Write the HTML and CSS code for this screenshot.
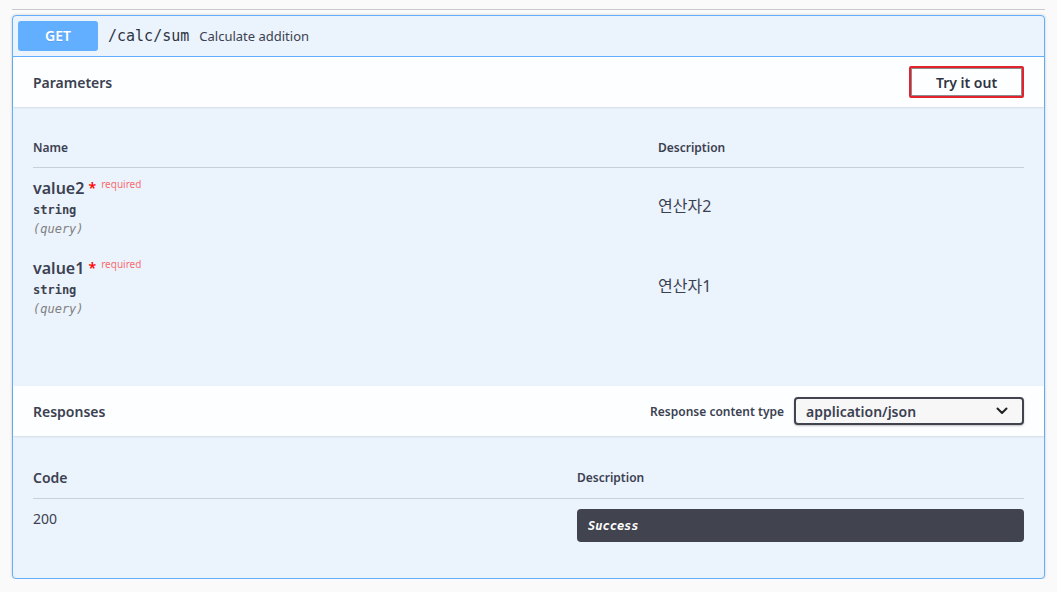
FILE: index.html
```html
<!DOCTYPE html>
<html lang="ko">
<head>
<meta charset="utf-8">
<title>GET /calc/sum</title>
<link rel="stylesheet" href="styles.css">
</head>
<body>
<div class="wrap">
  <div class="topline"></div>
  <div class="card">
    <div class="summary">
      <span class="method">GET</span>
      <span class="path">/calc/sum</span>
      <span class="summary-desc">Calculate addition</span>
    </div>

    <div class="section-header">
      <h4 class="title">Parameters</h4>
      <button class="try-btn">Try it out</button>
    </div>
    <div class="section-body params">
      <div class="ptable">
        <div class="th">Name</div>
        <div class="th">Description</div>

        <div class="pname-cell">
          <div class="pname">value2 <span class="star">*</span><span class="req">required</span></div>
          <div class="ptype">string</div>
          <div class="pin">(query)</div>
        </div>
        <div class="pdesc">연산자2</div>

        <div class="pname-cell">
          <div class="pname">value1 <span class="star">*</span><span class="req">required</span></div>
          <div class="ptype">string</div>
          <div class="pin">(query)</div>
        </div>
        <div class="pdesc">연산자1</div>
      </div>
    </div>

    <div class="section-header">
      <h4 class="title">Responses</h4>
      <div class="ctype">
        <span class="ctype-label">Response content type</span>
        <div class="select">
          <span>application/json</span>
          <svg class="chev" width="12" height="8" viewBox="0 0 12 8"><path d="M1.5 1.5 L6 6 L10.5 1.5" fill="none" stroke="#222" stroke-width="2" stroke-linecap="round" stroke-linejoin="round"/></svg>
        </div>
      </div>
    </div>
    <div class="section-body responses">
      <div class="rtable">
        <div class="th code-h">Code</div>
        <div class="th">Description</div>
        <div class="rcode">200</div>
        <div class="rdesc"><div class="md">Success</div></div>
      </div>
    </div>
  </div>
</div>
</body>
</html>
```

FILE: styles.css
```css
* { box-sizing: border-box; }
body {
  margin: 0;
  background: #fafafa;
  font-family: "Noto Sans", "Noto Sans CJK KR", sans-serif;
  color: #3b4151;
}
.wrap { padding: 9px 12px 0; }
.topline { border-top: 1px solid #c9c9cb; }
.card {
  margin-top: 5px;
  border: 1px solid #61affe;
  border-radius: 4px;
  background: #ebf3fc;
  box-shadow: 0 0 3px rgba(0,0,0,.19);
}
.summary {
  display: flex;
  align-items: center;
  padding: 5px;
  border-bottom: 1px solid #61affe;
}
.method {
  min-width: 80px;
  height: 30px;
  line-height: 30px;
  text-align: center;
  background: #61affe;
  color: #fff;
  border-radius: 3px;
  font-size: 14px;
  font-weight: 600;
  text-shadow: 0 1px 0 rgba(0,0,0,.1);
}
.path {
  padding: 0 10px;
  font-family: "DejaVu Sans Mono", monospace;
  font-size: 15px;
  font-weight: 400;
  color: #2f3443;
}
.summary-desc { font-size: 13px; color: #3b4151; }

.section-header {
  display: flex;
  align-items: center;
  justify-content: space-between;
  height: 50px;
  padding: 0 20px;
  background: rgba(255,255,255,.85);
  box-shadow: 0 1px 2px rgba(0,0,0,.1);
}
.title { margin: 0; font-size: 14px; font-weight: 600; }
.try-btn {
  width: 115px;
  height: 32px;
  background: transparent;
  border: 2px solid #e2222c;
  box-shadow: inset 0 0 0 1px #8c8c8c;
  border-radius: 2px;
  font-family: inherit;
  font-size: 14px;
  font-weight: 600;
  color: #2f3443;
}

.params { padding: 20px 20px 0; height: 279px; }
.ptable { display: grid; grid-template-columns: 625px 1fr; }
.th {
  height: 41px;
  display: flex;
  align-items: center;
  font-size: 12px;
  font-weight: 600;
  border-bottom: 1px solid rgba(59,65,81,.2);
}
.pname-cell { padding: 10px 0; height: 80px; }
.pname { font-size: 16px; font-weight: 600; line-height: 20px; height: 20px; }
.star { color: red; font-size: 14px; position: relative; top: -1px; }
.req { color: rgba(255,0,0,.6); font-size: 10px; font-weight: 400; margin-left: 5px; position: relative; top: -6px; }
.ptype {
  margin-top: 3px;
  height: 18px;
  line-height: 18px;
  font-family: "DejaVu Sans Mono", monospace;
  font-size: 12px;
  font-weight: 600;
}
.pin {
  margin-top: 1px;
  height: 18px;
  line-height: 18px;
  font-family: "DejaVu Sans Mono", monospace;
  font-size: 12px;
  font-style: italic;
  color: #808080;
}
.pdesc { padding-top: 28px; font-size: 16px; line-height: 20px; height: 80px; }

.ctype { display: flex; align-items: center; }
.ctype-label { font-size: 12px; font-weight: 600; margin-right: 10px; }
.select {
  width: 230px;
  height: 28px;
  display: flex;
  align-items: center;
  justify-content: space-between;
  padding: 0 14px 0 10px;
  background: #f7f7f7;
  border: 2px solid #41444e;
  border-radius: 4px;
  box-shadow: 0 1px 2px rgba(0,0,0,.25);
  font-size: 14px;
  font-weight: 600;
}
.chev { display: block; }

.responses { padding: 20px 20px 0; height: 142px; }
.rtable { display: grid; grid-template-columns: 544px 1fr; }
.rtable .th { height: 43px; }
.code-h { font-size: 14px; font-weight: 600; }
.rcode { padding-top: 10px; line-height: 20px; font-size: 14px; }
.rdesc { padding: 10px 0; }
.md {
  height: 33px;
  display: flex;
  align-items: center;
  padding: 0 11px;
  background: #41444e;
  border-radius: 4px;
  color: #fff;
  font-family: "DejaVu Sans Mono", monospace;
  font-size: 12px;
  font-weight: 700;
  font-style: italic;
}
```
